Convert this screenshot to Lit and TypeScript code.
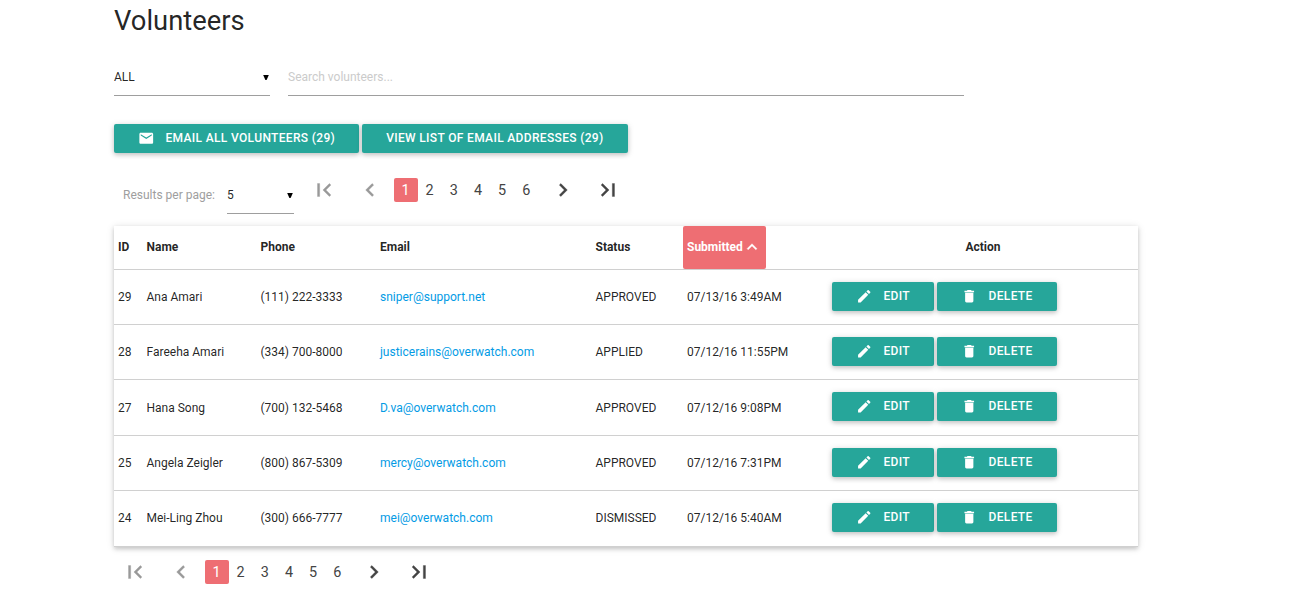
import { LitElement, html, css } from "lit";
import { customElement, property } from "lit/decorators.js";
import { classMap } from "lit/directives/class-map.js";

const ICONS: Record<string, string> = {
  email: "M20 4H4c-1.1 0-1.99.9-1.99 2L2 18c0 1.1.9 2 2 2h16c1.1 0 2-.9 2-2V6c0-1.1-.9-2-2-2zm0 4l-8 5-8-5V6l8 5 8-5v2z",
  edit: "M3 17.25V21h3.75L17.81 9.94l-3.75-3.75L3 17.25zM20.71 7.04c.39-.39.39-1.02 0-1.41l-2.34-2.34c-.39-.39-1.02-.39-1.41 0l-1.83 1.83 3.75 3.75 1.83-1.83z",
  delete: "M6 19c0 1.1.9 2 2 2h8c1.1 0 2-.9 2-2V7H6v12zM19 4h-3.5l-1-1h-5l-1 1H5v2h14V4z",
  first: "M18.41 16.59L13.82 12l4.59-4.59L17 6l-6 6 6 6zM6 6h2v12H6z",
  prev: "M15.41 7.41L14 6l-6 6 6 6 1.41-1.41L10.83 12z",
  next: "M10 6L8.59 7.41 13.17 12l-4.58 4.59L10 18l6-6z",
  last: "M5.59 7.41L10.18 12l-4.59 4.59L7 18l6-6-6-6zM16 6h2v12h-2z",
  up: "M12 8l-6 6 1.41 1.41L12 10.83l4.59 4.58L18 14z",
};

@customElement("md-icon")
class MdIcon extends LitElement {
  @property() name = "";
  static styles = css`
    :host { display: block; flex: none; }
    svg { display: block; width: 100%; height: 100%; fill: currentColor; }
  `;
  render() {
    return html`<svg viewBox="0 0 24 24"><path d=${ICONS[this.name]}></path></svg>`;
  }
}

@customElement("md-button")
class MdButton extends LitElement {
  @property() icon = "";
  static styles = css`
    :host {
      display: flex; box-sizing: border-box; height: 29px; flex: none;
      align-items: center; padding: 0 24px 1px; border-radius: 2px;
      background: #26a69a; color: #fff; font-weight: 500; font-size: 12px; letter-spacing: 0.34px;
      white-space: nowrap; cursor: pointer;
      box-shadow: 0 2px 4px 0 rgba(0, 0, 0, 0.16), 0 1px 7px 0 rgba(0, 0, 0, 0.12);
    }
    md-icon { width: 16.5px; height: 16.5px; margin: 0 11.2px 0 -0.2px; }
  `;
  render() {
    return html`${this.icon ? html`<md-icon name=${this.icon}></md-icon>` : ""}<slot></slot>`;
  }
}

@customElement("page-nav")
class PageNav extends LitElement {
  static styles = css`
    :host { display: flex; align-items: center; height: 24px; }
    md-icon { width: 26px; height: 26px; color: #444; stroke: currentColor; stroke-width: 0.3px; }
    .off { color: #999; }
    .prev { margin: 0 11px 0 19.5px; }
    .next { margin: 0 19px 0 11.4px; }
    .page {
      box-sizing: border-box; width: 24.2px; height: 24px; padding-top: 1px; line-height: 24px;
      text-align: center; font-size: 14.4px; color: #444; border-radius: 2px;
    }
    .active { background: #ee6e73; color: #fff; width: 24px; }
  `;
  render() {
    return html`
      <md-icon class="off" name="first"></md-icon>
      <md-icon class="off prev" name="prev"></md-icon>
      ${[1, 2, 3, 4, 5, 6].map(
        (n) => html`<div class=${classMap({ page: true, active: n === 1 })}>${n}</div>`
      )}
      <md-icon class="next" name="next"></md-icon>
      <md-icon name="last"></md-icon>
    `;
  }
}

const ROWS = [
  ["29", "Ana Amari", "(111) 222-3333", "sniper@support.net", "APPROVED", "07/13/16 3:49AM"],
  ["28", "Fareeha Amari", "(334) 700-8000", "justicerains@overwatch.com", "APPLIED", "07/12/16 11:55PM"],
  ["27", "Hana Song", "(700) 132-5468", "D.va@overwatch.com", "APPROVED", "07/12/16 9:08PM"],
  ["25", "Angela Zeigler", "(800) 867-5309", "mercy@overwatch.com", "APPROVED", "07/12/16 7:31PM"],
  ["24", "Mei-Ling Zhou", "(300) 666-7777", "mei@overwatch.com", "DISMISSED", "07/12/16 5:40AM"],
];

@customElement("app-root")
class AppRoot extends LitElement {
  static styles = css`
    :host {
      display: block; box-sizing: border-box; width: 1302px; height: 614px; overflow: hidden;
      padding-left: 114px; background: #fff; color: rgba(0, 0, 0, 0.87);
      font: 12px/18px Roboto, sans-serif;
    }
    h1 { margin: 0; padding-top: 4px; font-size: 27.36px; line-height: 35px; font-weight: 400; }
    .filters { display: flex; gap: 18px; margin-top: 21px; }
    .field {
      display: flex; justify-content: space-between; align-items: center; box-sizing: border-box;
      height: 36px; padding-bottom: 1px; border-bottom: 1px solid #9e9e9e;
    }
    .status { width: 156px; }
    .search { width: 676px; color: #cbcbcb; }
    .caret { width: 6px; height: 5px; fill: #000; margin: 1px 1px 0 0; }
    .buttons { display: flex; gap: 3px; margin-top: 28px; }
    .paging { display: flex; height: 73px; box-sizing: border-box; padding: 25px 0 0 9px; }
    .label { color: #9e9e9e; width: 104px; padding-top: 8px; }
    .count { width: 67px; margin-right: 17px; }
    .table { width: 1024px; box-shadow: 0 2px 4px 0 rgba(0, 0, 0, 0.16), 0 1px 8px 0 rgba(0, 0, 0, 0.12); }
    .row {
      display: grid; grid-template-columns: 28.5px 114px 119.5px 215.5px 91.5px 145px 310px;
      box-sizing: border-box; height: 55px; align-items: center; border-bottom: 1px solid #d0d0d0;
    }
    .row:nth-child(4), .row:nth-child(6) { height: 56px; }
    .row > div { padding: 0 4px; white-space: nowrap; }
    .row:nth-child(6) > div { padding-bottom: 1px; }
    .row.head { height: 44px; font-weight: 700; }
    .head > div:not(.sorted) { padding-bottom: 2px; }
    .head .sorted {
      display: flex; align-items: center; justify-self: start; box-sizing: border-box;
      width: 83px; height: 43px; padding-bottom: 1px; border-radius: 2px; background: #ee6e73; color: #fff;
    }
    .sorted md-icon { width: 20px; height: 20px; margin-left: -0.5px; stroke: currentColor; stroke-width: 0.4px; }
    .head .action { text-align: center; }
    .row .actions { display: flex; gap: 3px; padding-bottom: 1px; }
    .row:nth-child(4) .actions, .row:nth-child(6) .actions { padding-bottom: 2px; }
    .link { color: #039be5; }
    .bottom { margin: 13px 0 0 8px; }
  `;
  caret() {
    return html`<svg class="caret" viewBox="0 0 6 5"><path d="M0.2 0h5.6L3.6 5H2.4z"></path></svg>`;
  }
  render() {
    return html`
      <h1>Volunteers</h1>
      <div class="filters">
        <div class="field status"><span>ALL</span>${this.caret()}</div>
        <div class="field search">Search volunteers...</div>
      </div>
      <div class="buttons">
        <md-button icon="email">EMAIL ALL VOLUNTEERS (29)</md-button>
        <md-button>VIEW LIST OF EMAIL ADDRESSES (29)</md-button>
      </div>
      <div class="paging">
        <div class="label">Results per page:</div>
        <div class="field count"><span>5</span>${this.caret()}</div>
        <page-nav></page-nav>
      </div>
      <div class="table">
        <div class="row head">
          <div>ID</div><div>Name</div><div>Phone</div><div>Email</div><div>Status</div>
          <div class="sorted">Submitted<md-icon name="up"></md-icon></div>
          <div class="action">Action</div>
        </div>
        ${ROWS.map(
          (r) => html`<div class="row">
            ${r.map((t, i) => html`<div class=${classMap({ link: i === 3 })}>${t}</div>`)}
            <div class="actions">
              <md-button icon="edit">EDIT</md-button>
              <md-button icon="delete">DELETE</md-button>
            </div>
          </div>`
        )}
      </div>
      <page-nav class="bottom"></page-nav>
    `;
  }
}
